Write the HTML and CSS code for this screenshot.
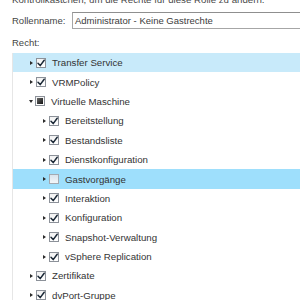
FILE: index.html
```html
<!DOCTYPE html>
<html lang="de">
<head>
<meta charset="utf-8">
<title>Rolle bearbeiten</title>
<link rel="stylesheet" href="styles.css">
</head>
<body>
<div class="page">
  <p class="intro">Kontrollkästchen, um die Rechte für diese Rolle zu ändern.</p>
  <div class="field">
    <span class="field-label">Rollenname:</span>
    <div class="input">Administrator - Keine Gastrechte</div>
  </div>
  <div class="section-label">Recht:</div>
  <ul class="tree">
    <li class="row hover lvl1"><span class="arrow"></span><span class="cb checked"><svg viewBox="0 0 10 10"><path d="M2 5.2 L4.2 7.6 L8.2 2.2"/></svg></span><span class="name">Transfer Service</span></li>
    <li class="row lvl1"><span class="arrow"></span><span class="cb checked"><svg viewBox="0 0 10 10"><path d="M2 5.2 L4.2 7.6 L8.2 2.2"/></svg></span><span class="name">VRMPolicy</span></li>
    <li class="row lvl1"><span class="arrow open"></span><span class="cb partial"><span class="fill"></span></span><span class="name">Virtuelle Maschine</span></li>
    <li class="row lvl2"><span class="arrow"></span><span class="cb checked"><svg viewBox="0 0 10 10"><path d="M2 5.2 L4.2 7.6 L8.2 2.2"/></svg></span><span class="name">Bereitstellung</span></li>
    <li class="row lvl2"><span class="arrow"></span><span class="cb checked"><svg viewBox="0 0 10 10"><path d="M2 5.2 L4.2 7.6 L8.2 2.2"/></svg></span><span class="name">Bestandsliste</span></li>
    <li class="row lvl2"><span class="arrow"></span><span class="cb checked"><svg viewBox="0 0 10 10"><path d="M2 5.2 L4.2 7.6 L8.2 2.2"/></svg></span><span class="name">Dienstkonfiguration</span></li>
    <li class="row selected lvl2"><span class="arrow"></span><span class="cb empty"></span><span class="name">Gastvorgänge</span></li>
    <li class="row lvl2"><span class="arrow"></span><span class="cb checked"><svg viewBox="0 0 10 10"><path d="M2 5.2 L4.2 7.6 L8.2 2.2"/></svg></span><span class="name">Interaktion</span></li>
    <li class="row lvl2"><span class="arrow"></span><span class="cb checked"><svg viewBox="0 0 10 10"><path d="M2 5.2 L4.2 7.6 L8.2 2.2"/></svg></span><span class="name">Konfiguration</span></li>
    <li class="row lvl2"><span class="arrow"></span><span class="cb checked"><svg viewBox="0 0 10 10"><path d="M2 5.2 L4.2 7.6 L8.2 2.2"/></svg></span><span class="name">Snapshot-Verwaltung</span></li>
    <li class="row lvl2"><span class="arrow"></span><span class="cb checked"><svg viewBox="0 0 10 10"><path d="M2 5.2 L4.2 7.6 L8.2 2.2"/></svg></span><span class="name">vSphere Replication</span></li>
    <li class="row lvl1"><span class="arrow"></span><span class="cb checked"><svg viewBox="0 0 10 10"><path d="M2 5.2 L4.2 7.6 L8.2 2.2"/></svg></span><span class="name">Zertifikate</span></li>
    <li class="row lvl1"><span class="arrow"></span><span class="cb checked"><svg viewBox="0 0 10 10"><path d="M2 5.2 L4.2 7.6 L8.2 2.2"/></svg></span><span class="name">dvPort-Gruppe</span></li>
  </ul>
</div>
</body>
</html>
```

FILE: styles.css
```css
html, body {
  margin: 0;
  padding: 0;
  overflow: hidden;
  background: #ffffff;
}

.page {
  display: flex;
  flex-direction: column;
  padding-left: 12px;
  font-family: "Liberation Sans", Arial, sans-serif;
  color: #333333;
}

.intro {
  margin: -5px 0 0 0;
  font-size: 9.7px;
  line-height: 10px;
  color: #4a4a4a;
  white-space: nowrap;
}

.field {
  display: flex;
  align-items: center;
  margin-top: 7px;
  font-size: 9.5px;
}

.field-label {
  width: 60px;
  flex: none;
  color: #444444;
}

.input {
  flex: none;
  width: 260px;
  height: 15px;
  line-height: 15px;
  border: 1px solid #a6a6a6;
  border-top-color: #8f8f8f;
  padding-left: 2px;
  color: #3c3c3c;
  white-space: nowrap;
}

.section-label {
  margin-top: 8px;
  font-size: 9.5px;
  line-height: 12px;
  color: #444444;
}

.tree {
  list-style: none;
  margin: 4px 0 0 0;
  padding: 0;
  border-left: 1px solid #e6e6e6;
  font-size: 9.7px;
}

.row {
  display: flex;
  align-items: center;
  height: 19.4px;
  white-space: nowrap;
}

.row.lvl1 { padding-left: 17px; }
.row.lvl2 { padding-left: 30px; }

.row.hover { background: #c8eafa; }
.row.selected { background: #9edffc; }

.arrow {
  flex: none;
  width: 0;
  height: 0;
  border-left: 3px solid #2b2b2b;
  border-top: 2.5px solid transparent;
  border-bottom: 2.5px solid transparent;
  margin-right: 3px;
}

.arrow.open {
  border-left: 2.5px solid transparent;
  border-right: 2.5px solid transparent;
  border-top: 3px solid #2b2b2b;
  border-bottom: 0;
  margin-left: -1px;
  margin-right: 2px;
}

.cb {
  flex: none;
  box-sizing: border-box;
  width: 10px;
  height: 10px;
  border: 1px solid #8c9199;
  background: linear-gradient(#f2f2f2, #ffffff);
  margin-right: 6px;
  display: flex;
  align-items: center;
  justify-content: center;
}

.cb svg {
  width: 10px;
  height: 10px;
  flex: none;
  overflow: visible;
}

.cb svg path {
  fill: none;
  stroke: #1b2836;
  stroke-width: 1.5;
  stroke-linecap: round;
  stroke-linejoin: round;
}

.cb.partial .fill {
  width: 6px;
  height: 6px;
  background: linear-gradient(135deg, #6a6a6a, #111111);
}

.cb.empty {
  border-color: #a3aab2;
  background: linear-gradient(#d9e4ed, #f2f6f9);
}

.name {
  color: #333333;
}
```
